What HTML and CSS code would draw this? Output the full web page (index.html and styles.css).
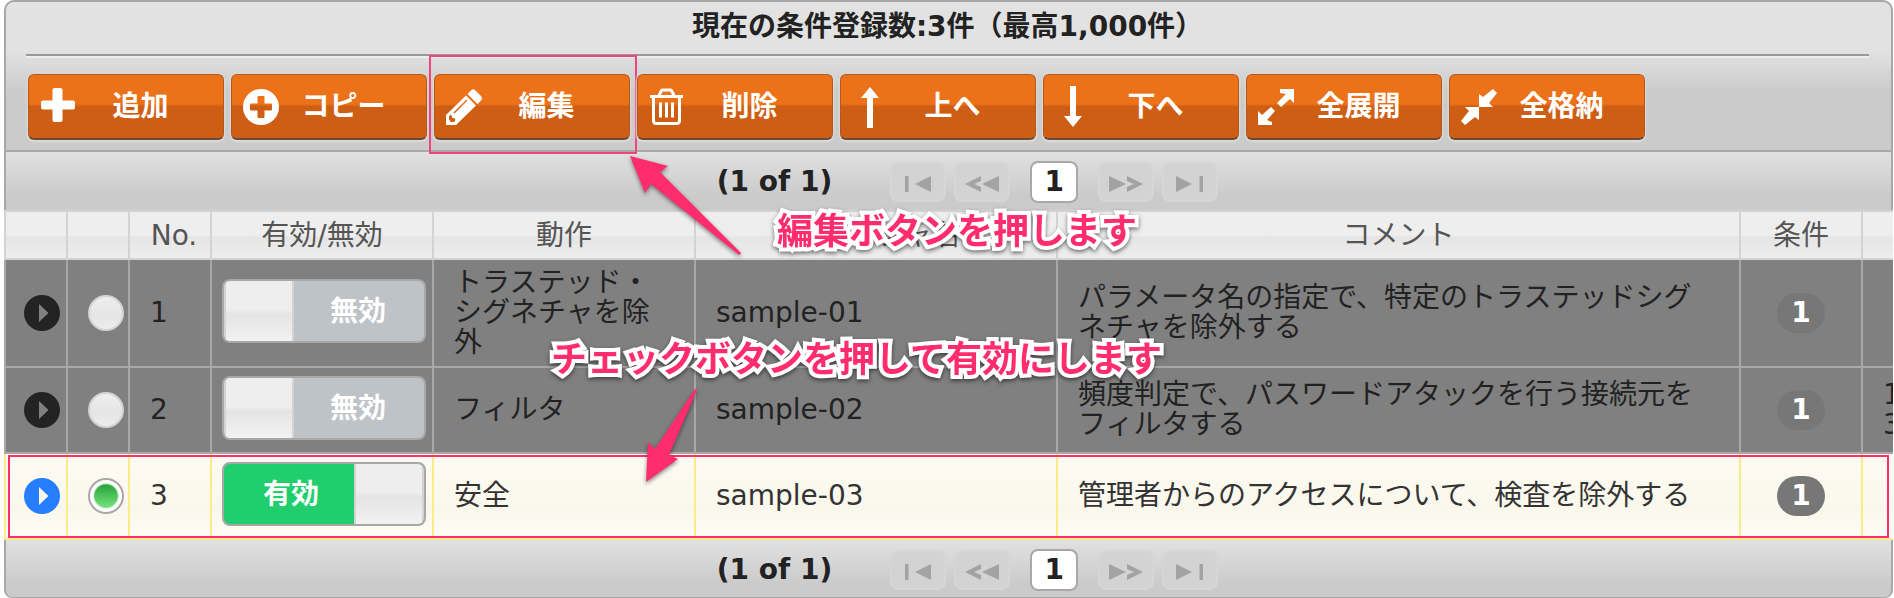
FILE: index.html
```html
<!DOCTYPE html>
<html lang="ja">
<head>
<meta charset="utf-8">
<title>条件一覧</title>
<link rel="stylesheet" href="styles.css">
</head>
<body>
<svg class="defs" aria-hidden="true">
  <symbol id="i-first" viewBox="0 0 28 16"><path d="M1 0h3.500v16H1zM27 0v16L11 8z"/></symbol>
  <symbol id="i-prev" viewBox="0 0 34 16"><path d="M34 0v16L17 8zM16 0v5l-7 3 7 3v5L0 8z"/></symbol>
  <symbol id="i-next" viewBox="0 0 34 16"><path d="M0 0v16l17-8zM18 0v5l7 3-7 3v5l16-8z"/></symbol>
  <symbol id="i-last" viewBox="0 0 28 16"><path d="M27 0h-3.500v16H27zM0 0v16l16-8z"/></symbol>
  <symbol id="i-expander" viewBox="0 0 36 36"><path fill-rule="evenodd" d="M18 0a18 18 0 1 1 0 36a18 18 0 1 1 0-36zM15 9v18l9.500-9z"/></symbol>
</svg>
<main class="panel">
  <header class="panel-header">
    <h1 class="title">現在の条件登録数:3件（最高1,000件）</h1>
    <hr class="rule">
    <div class="toolbar">
      <button class="btn" type="button">
        <svg class="btn-icon" viewBox="0 0 36 44"><path d="M14.500 3h6q2 0 2 2v10.500H33q2 0 2 2v5q0 2-2 2H22.500V35q0 2-2 2h-6q-2 0-2-2V24.500H3q-2 0-2-2v-5q0-2 2-2h9.500V5q0-2 2-2z"/></svg>
        <span class="btn-text">追加</span>
      </button>
      <button class="btn" type="button">
        <svg class="btn-icon" viewBox="0 0 36 44"><path fill-rule="evenodd" d="M18 4a18 18 0 1 1 0 36a18 18 0 1 1 0-36zM15.500 11q-1 0-1 1v6.500H8q-1 0-1 1v5q0 1 1 1h6.500V32q0 1 1 1h5q1 0 1-1v-6.500H28q1 0 1-1v-5q0-1-1-1h-6.500V12q0-1-1-1z"/></svg>
        <span class="btn-text">コピー</span>
      </button>
      <button class="btn highlighted" type="button">
        <svg class="btn-icon" viewBox="0 0 36 44"><path fill-rule="evenodd" d="M25 5.500q2-2.500 4.500 0L35 11q2 2.500 0 4.500L31.500 19 21.500 9zM20 10.500L30 20.500 10 40H0V30zM3 31.500v3l2 2.500h3l1.500-2-1.500-2H6v-2l-1.500-1.500zM8.500 28.500L21.500 15.500l-1-1L7.500 27.500z"/></svg>
        <span class="btn-text">編集</span>
      </button>
      <button class="btn" type="button">
        <svg class="btn-icon stroked" viewBox="0 0 36 44"><path d="M1 11.500h33M10 10.500l2.500-5q.5-.5 1-.5h8q.5 0 1 .5l2.500 5M4.500 12v23.500q0 3 3 3h20q3 0 3-3V12"/><path d="M11.500 17.500v15M17.500 17.500v15M23.500 17.500v15"/></svg>
        <span class="btn-text">削除</span>
      </button>
      <button class="btn" type="button">
        <svg class="btn-icon" viewBox="0 0 36 44"><path d="M18 2l9 11h-6v30h-6V13H9z"/></svg>
        <span class="btn-text">上へ</span>
      </button>
      <button class="btn" type="button">
        <svg class="btn-icon" viewBox="0 0 36 44"><path d="M18 42l9-11h-6V1h-6v30H9z"/></svg>
        <span class="btn-text">下へ</span>
      </button>
      <button class="btn" type="button">
        <svg class="btn-icon" viewBox="0 0 36 44"><path d="M22 4h14v14l-4-4-9 8-4-4 9-9-6-1zM0 40V26l4 4 9-8 4 4-8 9 5 2v3z"/></svg>
        <span class="btn-text">全展開</span>
      </button>
      <button class="btn" type="button">
        <svg class="btn-icon" viewBox="0 0 36 44"><path d="M32 4l4 4-8 10 4 4H18V9l4 3zM4 40l-4-4 8-10-4-4h14v13l-4-3z"/></svg>
        <span class="btn-text">全格納</span>
      </button>
    </div>
  </header>

  <nav class="paginator" aria-label="ページ送り（上）">
    <span class="page-status">(1 of 1)</span>
    <span class="page-group">
      <button class="page-btn" type="button" disabled aria-label="最初"><svg width="28" height="16"><use href="#i-first"/></svg></button>
      <button class="page-btn" type="button" disabled aria-label="前へ"><svg width="34" height="16"><use href="#i-prev"/></svg></button>
    </span>
    <button class="page-current" type="button">1</button>
    <span class="page-group">
      <button class="page-btn" type="button" disabled aria-label="次へ"><svg width="34" height="16"><use href="#i-next"/></svg></button>
      <button class="page-btn" type="button" disabled aria-label="最後"><svg width="28" height="16"><use href="#i-last"/></svg></button>
    </span>
  </nav>

  <table class="grid">
    <colgroup>
      <col class="c-icon"><col class="c-icon"><col class="c-no"><col class="c-switch"><col class="c-action"><col class="c-name"><col><col class="c-count"><col class="c-tail">
    </colgroup>
    <thead>
      <tr><th></th><th></th><th class="no">No.</th><th>有効/無効</th><th>動作</th><th>シグネチャ名</th><th>コメント</th><th>条件</th><th></th></tr>
    </thead>
    <tbody>
      <tr class="row tall">
        <td><button class="expander" type="button" aria-label="展開"><svg width="36" height="36"><use href="#i-expander"/></svg></button></td>
        <td><input class="radio" type="radio" name="row" aria-label="1を選択"></td>
        <td>1</td>
        <td class="switch-cell"><label class="switch"><input class="switch-input" type="checkbox"><span class="switch-knob"></span><span class="switch-text">無効</span></label></td>
        <td>トラステッド・シグネチャを除外</td>
        <td>sample-01</td>
        <td>パラメータ名の指定で、特定のトラステッドシグネチャを除外する</td>
        <td class="count-cell"><span class="badge">1</span></td>
        <td></td>
      </tr>
      <tr class="row">
        <td><button class="expander" type="button" aria-label="展開"><svg width="36" height="36"><use href="#i-expander"/></svg></button></td>
        <td><input class="radio" type="radio" name="row" aria-label="2を選択"></td>
        <td>2</td>
        <td class="switch-cell"><label class="switch"><input class="switch-input" type="checkbox"><span class="switch-knob"></span><span class="switch-text">無効</span></label></td>
        <td>フィルタ</td>
        <td>sample-02</td>
        <td>頻度判定で、パスワードアタックを行う接続元をフィルタする</td>
        <td class="count-cell"><span class="badge">1</span></td>
        <td class="cut">1<br>3</td>
      </tr>
      <tr class="row selected">
        <td><button class="expander" type="button" aria-label="展開"><svg width="36" height="36"><use href="#i-expander"/></svg></button></td>
        <td><input class="radio" type="radio" name="row" checked aria-label="3を選択"></td>
        <td>3</td>
        <td class="switch-cell"><label class="switch on"><input class="switch-input" type="checkbox" checked><span class="switch-text">有効</span><span class="switch-knob"></span></label></td>
        <td>安全</td>
        <td>sample-03</td>
        <td>管理者からのアクセスについて、検査を除外する</td>
        <td class="count-cell"><span class="badge">1</span></td>
        <td></td>
      </tr>
    </tbody>
  </table>

  <nav class="paginator bottom" aria-label="ページ送り（下）">
    <span class="page-status">(1 of 1)</span>
    <span class="page-group">
      <button class="page-btn" type="button" disabled aria-label="最初"><svg width="28" height="16"><use href="#i-first"/></svg></button>
      <button class="page-btn" type="button" disabled aria-label="前へ"><svg width="34" height="16"><use href="#i-prev"/></svg></button>
    </span>
    <button class="page-current" type="button">1</button>
    <span class="page-group">
      <button class="page-btn" type="button" disabled aria-label="次へ"><svg width="34" height="16"><use href="#i-next"/></svg></button>
      <button class="page-btn" type="button" disabled aria-label="最後"><svg width="28" height="16"><use href="#i-last"/></svg></button>
    </span>
  </nav>

  <svg class="arrow arrow-edit" viewBox="0 0 114 102"><path d="M1 1l38 10-8 6 81 81-2 2L22 29l-6 9z"/></svg>
  <p class="note note-edit">編集ボタンを押します</p>
  <svg class="arrow arrow-row" viewBox="0 0 58 96"><path d="M2 94l2-40 7 7L51 1l2 1-28 65 9 4z"/></svg>
  <p class="note note-row">チェックボタンを押して有効にします</p>
</main>
</body>
</html>
```

FILE: styles.css
```css
* { box-sizing: border-box; }

body {
  margin: 0;
  background: #fff;
  color: #222;
  font: 28px/30px "DejaVu Sans", "Noto Sans CJK JP", sans-serif;
  overflow: hidden;
}

button { font: inherit; padding: 0; margin: 0; cursor: pointer; }

.defs { position: absolute; width: 0; height: 0; }

.panel { position: relative; margin: 0 1px 0 4px; }

/* header and toolbar */
.panel-header {
  padding: 9px 22px 10px 20px;
  border: 2px solid #a8a8a8;
  border-radius: 10px 10px 0 0;
  background: linear-gradient(#e2e2e2 33%, #cbcbcb 60%);
}

.title {
  margin: 0 0 11px;
  font-size: 28px;
  line-height: 32px;
  font-weight: bold;
  text-align: center;
}

.rule {
  height: 4px;
  margin: 0 0 16px;
  border: 0;
  border-top: 2px solid #999;
  border-bottom: 2px solid #eee;
}

.toolbar { display: flex; gap: 7px; padding: 0 2px; }

.btn {
  position: relative;
  display: flex;
  align-items: center;
  width: 196px;
  height: 66px;
  padding: 0 18px 0 11px;
  border: 1px solid #b4581c;
  border-bottom: 2px solid #6b4a35;
  border-radius: 6px;
  background: linear-gradient(#ec721a 46%, #cf5e15 50%);
  box-shadow: 0 1px 2px 1px #dcdcdc;
  color: #fff;
  font-weight: bold;
}

.btn-icon { flex: none; width: 36px; height: 44px; fill: #fff; }
.btn-icon.stroked { fill: none; stroke: #fff; stroke-width: 3; }
.btn-text { flex: 1; text-align: center; }

.highlighted::after {
  content: "";
  position: absolute;
  inset: -20px -8px -16px -6px;
  border: 2px solid #f0457c;
}

/* paginator */
.paginator {
  display: flex;
  align-items: center;
  justify-content: center;
  gap: 20px;
  height: 58px;
  padding: 2px 0 0 38px;
  border: solid #a8a8a8;
  border-width: 0 2px;
  background: linear-gradient(#e1e1e1, #cbcbcb 75%);
  font-weight: bold;
}

.bottom { border-bottom-width: 1px; border-radius: 0 0 8px 8px; }
.page-status { margin-right: 38px; }
.page-group { display: flex; gap: 8px; }

.page-btn {
  display: flex;
  align-items: center;
  justify-content: center;
  width: 56px;
  height: 40px;
  padding-top: 4px;
  border: 2px solid #d6d6d6;
  border-radius: 8px;
  background: #d3d3d3;
  fill: #a3a3a3;
}

.page-current {
  width: 48px;
  height: 42px;
  border: 2px solid #a8a8a8;
  border-radius: 8px;
  background: #fff;
  color: #222;
  font-weight: bold;
}

/* table */
.grid {
  width: 100%;
  table-layout: fixed;
  border-collapse: separate;
  border-spacing: 0;
}

.c-icon { width: 62px; }
.c-no { width: 82px; }
.c-switch { width: 222px; }
.c-action { width: 262px; }
.c-name { width: 362px; }
.c-count { width: 122px; }
.c-tail { width: 32px; }

.grid th {
  height: 50px;
  padding: 2px 0 0;
  border: solid #d3d3d3;
  border-width: 2px 0 2px 2px;
  background: linear-gradient(#eee 50%, #e5e5e5 55%, #eee);
  color: #555;
  font-weight: normal;
}

.grid .no { padding-left: 8px; }

.grid td {
  height: 86px;
  padding: 0 20px;
  border: solid #a8a8a8;
  border-width: 0 0 2px 2px;
  background: #808080;
}

.grid .tall td { height: 108px; }
.grid .cut { overflow: hidden; white-space: nowrap; }

.selected { position: relative; color: #333; }

.grid .selected td {
  border-color: #fbec88;
  background: linear-gradient(#fefaf2, #faf8ec 65%, #fdfcf5);
}

.selected td:first-child::after {
  content: "";
  position: absolute;
  inset: 1px 4px 2px 4px;
  border: 2px solid #ff2d6e;
}

.grid .switch-cell { padding: 0 6px 4px 10px; }
.grid .count-cell { padding: 0; text-align: center; }

.expander {
  display: block;
  width: 36px;
  height: 36px;
  margin-left: -2px;
  border: 0;
  background: none;
  fill: #232323;
}

.selected .expander { fill: #267dff; }

.radio {
  appearance: none;
  display: block;
  width: 36px;
  height: 36px;
  margin: 0;
  border: 2px solid #d3d3d3;
  border-radius: 50%;
  background: linear-gradient(#eee, #e5e5e5 60%, #eee);
}

.radio:checked {
  border-color: #a8a8a8;
  background: radial-gradient(circle, transparent 11px, #fff 13px), linear-gradient(#2ea83c 20%, #6fdd77 80%);
}

.switch {
  display: flex;
  width: 204px;
  height: 64px;
  overflow: hidden;
  border: 2px solid #a8a8a8;
  border-radius: 8px;
  background: #bec3c7;
  color: #fff;
  font-weight: bold;
}

.switch.on { background: #20ce6d; }
.switch-input { position: absolute; opacity: 0; }

.switch-knob {
  flex: none;
  width: 70px;
  border: 2px solid #d3d3d3;
  border-width: 0 2px;
  background: linear-gradient(#eee 48%, #e4e4e4 55%, #f2f2f2);
}

.switch-text { flex: 1; padding-right: 2px; line-height: 62px; text-align: center; }
.on .switch-text { padding: 0 0 0 4px; }

.badge {
  display: inline-block;
  width: 48px;
  height: 40px;
  border-radius: 20px;
  background: #777;
  color: #fff;
  font-weight: bold;
  line-height: 40px;
}

/* callouts laid over the screen */
.note {
  position: absolute;
  margin: 0;
  color: #ff2d6e;
  font-family: "Noto Sans CJK JP", sans-serif;
  font-size: 36px;
  line-height: 40px;
  font-weight: bold;
  white-space: nowrap;
  -webkit-text-stroke: 8px #fff;
  paint-order: stroke fill;
  filter: drop-shadow(0 2px 2px #0008);
}

.note-edit { left: 773px; top: 208px; }
.note-row { left: 547px; top: 336px; }

.arrow { position: absolute; fill: #ff2d6e; filter: drop-shadow(0 2px 2px #0007); }
.arrow-edit { left: 625px; top: 155px; width: 114px; height: 102px; }
.arrow-row { left: 640px; top: 388px; width: 58px; height: 96px; }
```
